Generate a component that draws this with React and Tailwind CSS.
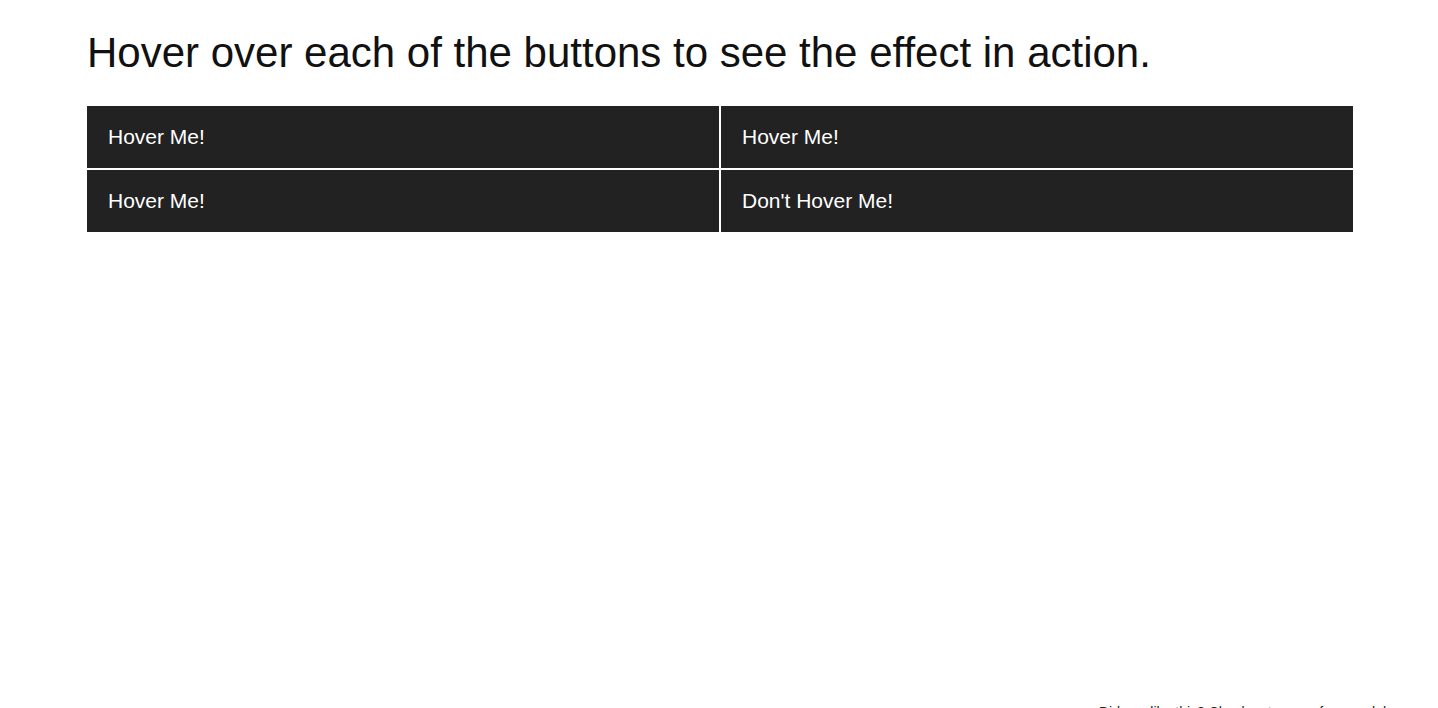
const labels = ["Hover Me!", "Hover Me!", "Hover Me!", "Don't Hover Me!"];

export default function App() {
  return (
    <div className="relative h-[708px] overflow-hidden bg-white font-['Liberation_Sans',Arial,sans-serif]">
      <div className="ml-[87px] w-[1266px]">
        <h1 className="pt-[26px] text-[42px] leading-[54px] font-normal text-[#111]">
          Hover over each of the buttons to see the effect in action.
        </h1>
        <div className="mt-[26px] grid grid-cols-2 gap-[2px]">
          {labels.map((label, i) => (
            <button
              key={i}
              className="h-[62px] bg-[#222] pl-[21px] text-left text-[21px] text-white hover:bg-[#444]"
            >
              {label}
            </button>
          ))}
        </div>
      </div>
      <div className="absolute left-[1099px] top-[702px] whitespace-nowrap text-[14px] text-[#222]">
        Did you like this? Check out more of my work here
      </div>
    </div>
  );
}
